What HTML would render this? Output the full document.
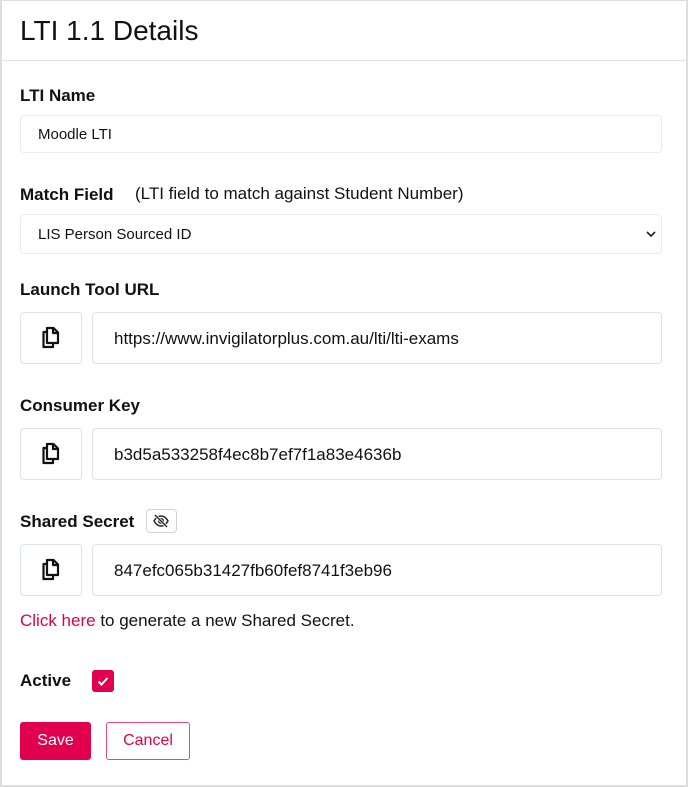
<!DOCTYPE html>
<html><head><meta charset="utf-8"><style>
*{box-sizing:border-box;margin:0;padding:0}
body{width:688px;height:787px;background:#fff;font-family:"Liberation Sans",sans-serif;color:#111;position:relative;overflow:hidden}
.frame{position:absolute;left:0;top:0;width:688px;height:787px;border:2px solid #ddd;border-top:1px solid #ddd}
.a{position:absolute;white-space:nowrap}
.lbl{font-weight:bold;font-size:17px}
.box{position:absolute;border:1px solid #dfe2e6;border-radius:4px;background:#fff}
.f{font-size:15px;line-height:1}
.big{font-size:17px}
</style></head><body>
<div class="frame"></div>
<div class="a" style="left:20px;top:15px;font-size:28px">LTI 1.1 Details</div>
<div class="a" style="left:1px;top:60px;width:685px;height:1px;background:#e0e0e0"></div>

<div class="a lbl" style="left:20px;top:86px">LTI Name</div>
<div class="box" style="left:20px;top:115px;width:642px;height:38px;border-color:#e8ebee"></div>
<div class="a f" style="left:38px;top:127px">Moodle LTI</div>

<div class="a lbl" style="left:20px;top:185px">Match Field</div>
<div class="a" style="left:135px;top:184px;font-size:17px">(LTI field to match against Student Number)</div>
<div class="box" style="left:20px;top:214px;width:642px;height:40px;border-color:#e8ebee"></div>
<div class="a f" style="left:38px;top:227px">LIS Person Sourced ID</div>
<svg class="a" style="left:645px;top:229px" width="12" height="10"><path d="M2 3l4 4 4-4" fill="none" stroke="#222" stroke-width="1.6"/></svg>

<div class="a lbl" style="left:20px;top:280px">Launch Tool URL</div>
<div class="box" style="left:20px;top:312px;width:62px;height:52px"></div>
<div class="box" style="left:92px;top:312px;width:570px;height:52px"></div>
<div class="a big" style="left:114px;top:329px">https://www.invigilatorplus.com.au/lti/lti-exams</div>

<div class="a lbl" style="left:20px;top:396px">Consumer Key</div>
<div class="box" style="left:20px;top:428px;width:62px;height:52px"></div>
<div class="box" style="left:92px;top:428px;width:570px;height:52px"></div>
<div class="a big" style="left:114px;top:445px">b3d5a533258f4ec8b7ef7f1a83e4636b</div>

<div class="a lbl" style="left:20px;top:512px">Shared Secret</div>
<div class="box" style="left:146px;top:509px;width:31px;height:24px;border-color:#d4d4d4"></div>
<svg class="a" style="left:152px;top:513px" width="18" height="16" viewBox="0 0 18 16"><path d="M2 8c2-3.5 4.5-5 7-5s5 1.5 7 5c-2 3.5-4.5 5-7 5S4 11.5 2 8z" fill="none" stroke="#222" stroke-width="1.4"/><circle cx="9" cy="8" r="2.3" fill="none" stroke="#222" stroke-width="1.4"/><path d="M3 2l12 12" stroke="#fff" stroke-width="3"/><path d="M3 2l12 12" stroke="#222" stroke-width="1.4"/></svg>
<div class="box" style="left:20px;top:544px;width:62px;height:52px"></div>
<div class="box" style="left:92px;top:544px;width:570px;height:52px"></div>
<div class="a big" style="left:114px;top:561px">847efc065b31427fb60fef8741f3eb96</div>

<div class="a big" style="left:20px;top:611px"><span style="color:#e0004d">Click here</span> to generate a new Shared Secret.</div>

<div class="a lbl" style="left:20px;top:671px">Active</div>
<div class="a" style="left:92px;top:670px;width:22px;height:22px;background:#e0004d;border-radius:3px"></div>
<svg class="a" style="left:92px;top:670px" width="22" height="22"><path d="M6.5 11.5l3 3 6-6.5" fill="none" stroke="#fff" stroke-width="2"/></svg>

<div class="a" style="left:20px;top:722px;width:71px;height:38px;background:#e0004d;border-radius:3px;color:#fff;font-size:16px;text-align:center;line-height:38px">Save</div>
<div class="a" style="left:106px;top:722px;width:84px;height:38px;border:1px solid #e8457a;border-radius:3px;color:#e0004d;font-size:16px;text-align:center;line-height:36px">Cancel</div>

<svg class="a" style="left:40px;top:326px" width="22" height="24" viewBox="0 0 22 24"><g fill="none" stroke="#111" stroke-width="2.2" stroke-linejoin="round"><path d="M7 2h6.5l4.5 4.5V17H7z"/><path d="M13 2v5h5"/><path d="M7 6H3.5v15H13v-4"/></g></svg>
<svg class="a" style="left:40px;top:442px" width="22" height="24" viewBox="0 0 22 24"><g fill="none" stroke="#111" stroke-width="2.2" stroke-linejoin="round"><path d="M7 2h6.5l4.5 4.5V17H7z"/><path d="M13 2v5h5"/><path d="M7 6H3.5v15H13v-4"/></g></svg>
<svg class="a" style="left:40px;top:558px" width="22" height="24" viewBox="0 0 22 24"><g fill="none" stroke="#111" stroke-width="2.2" stroke-linejoin="round"><path d="M7 2h6.5l4.5 4.5V17H7z"/><path d="M13 2v5h5"/><path d="M7 6H3.5v15H13v-4"/></g></svg>
</body></html>
